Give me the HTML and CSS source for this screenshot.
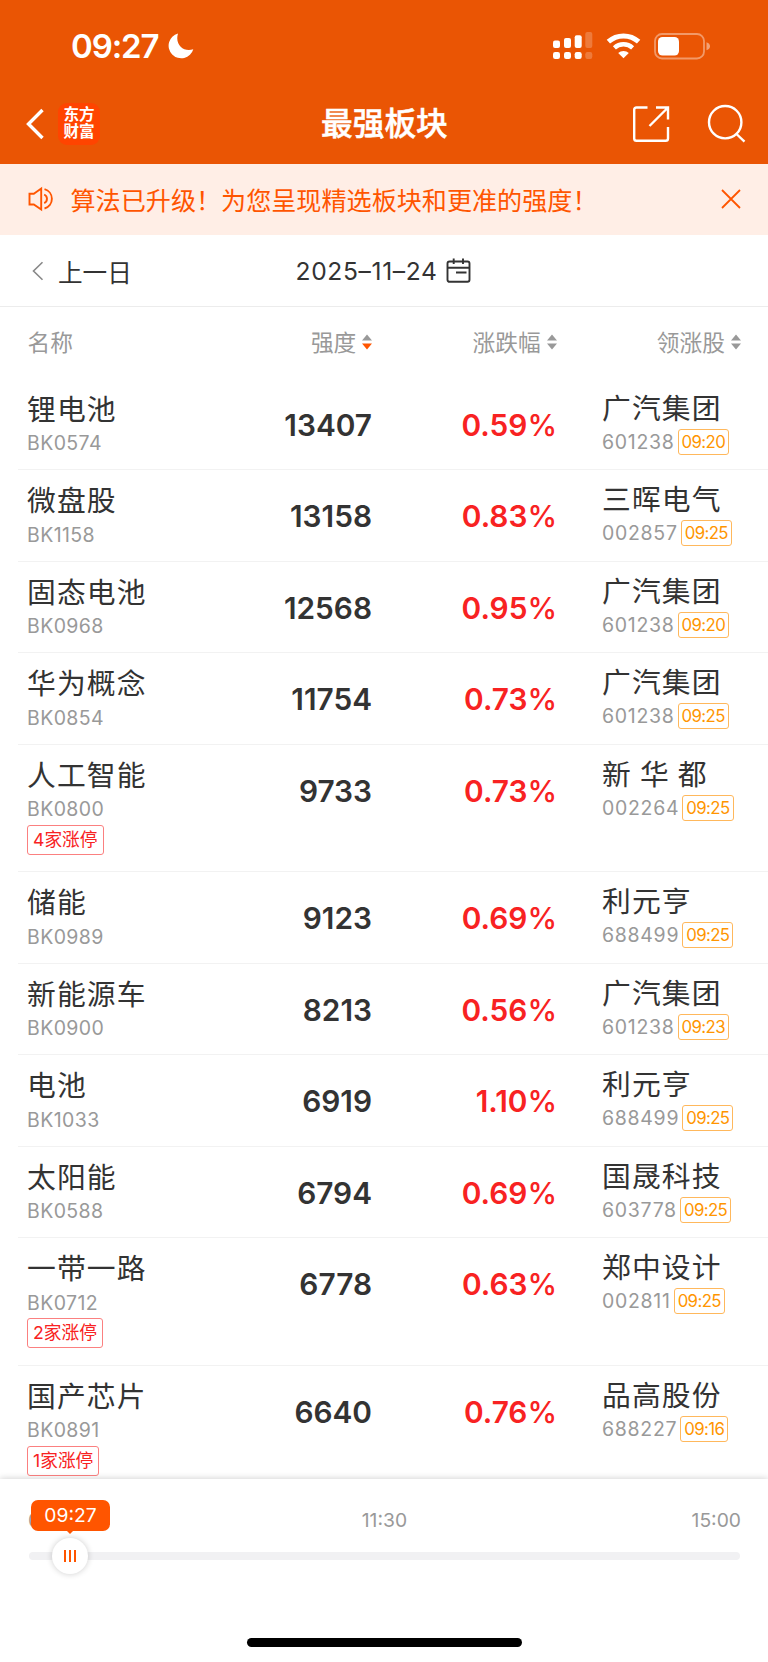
FILE: index.html
```html
<!DOCTYPE html>
<html lang="zh-CN">
<head>
    <meta charset="utf-8">
    <title>最强板块</title>
    <link rel="stylesheet" href="styles.css">
</head>

<body>
<div class="page">

  <header class="top">
    <div class="status">
      <span class="clock">09:27</span>
      <svg class="moon" width="26" height="26" viewBox="0 0 26 26"><path d="M10 0.5A12.6 12.6 0 1 0 25.3 16.2C16 19.5 6.500 12 10 0.500Z" fill="#fff"/></svg>
      <svg class="signal" width="40" height="28" viewBox="0 0 40 28" fill="#fff">
        <rect x="0" y="8.500" width="7" height="7.500" rx="2"/><rect x="0" y="20" width="7" height="7" rx="2.200"/>
        <rect x="11" y="6" width="7" height="10" rx="2"/><rect x="11" y="20" width="7" height="7" rx="2.200"/>
        <rect x="21.700" y="3.200" width="7" height="12.800" rx="2"/><rect x="21.700" y="20" width="7" height="7" rx="2.200"/>
        <g opacity=".22"><rect x="32.300" y="0" width="7" height="16" rx="2"/><rect x="32.300" y="20" width="7" height="7" rx="2.200"/></g>
      </svg>
      <svg class="wifi" width="36" height="26" viewBox="0 0 36 26" fill="none" stroke="#fff">
        <path d="M2.400 8.700A22.500 22.500 0 0 1 32.600 8.700" stroke-width="5"/>
        <path d="M8.400 14.800A13.500 13.500 0 0 1 26.600 14.800" stroke-width="4.400"/>
        <path d="M17.500 25.300L12.200 20A7.800 7.800 0 0 1 22.800 20Z" fill="#fff" stroke="none"/>
      </svg>
      <svg class="battery" width="57" height="27" viewBox="0 0 57 27">
        <rect x="1" y="1" width="49" height="24.500" rx="7" fill="none" stroke="#fff" stroke-opacity=".4" stroke-width="1.800"/>
        <rect x="4" y="4" width="21" height="18.500" rx="4.500" fill="#fff"/>
        <path d="M52.500 9.300Q56 10.500 56 13.300T52.500 17.300Z" fill="#fff" fill-opacity=".45"/>
      </svg>
    </div>
    <div class="nav">
      <svg class="back" width="20" height="32" viewBox="0 0 20 32"><path d="M17.500 2L3.500 16L17.500 30" fill="none" stroke="#fff" stroke-width="3.400"/></svg>
      <div class="logo">东方<br>财富</div>
      <h1>最强板块</h1>
      <svg class="share" width="38" height="38" viewBox="0 0 38 38" fill="none" stroke="#fff" stroke-width="2.400">
        <path d="M15.500 2.500H4.500Q2.200 2.500 2.200 4.800V33.500Q2.200 35.800 4.500 35.800H33.700Q36 35.800 36 33.500V22"/>
        <path d="M24 2.500H36V14.500M36 2.500L17.500 21"/>
      </svg>
      <svg class="search" width="40" height="40" viewBox="0 0 40 40" fill="none" stroke="#fff" stroke-width="2.400">
        <circle cx="18.200" cy="18.200" r="16.200"/><path d="M29.500 30L37.500 37.700"/>
      </svg>
    </div>
  </header>

  <div class="notice">
    <svg class="horn" width="28" height="26" viewBox="0 0 28 26" fill="none" stroke="#ff5500" stroke-width="1.900">
      <path d="M1.500 7.800H5.800L13.200 2.500V23.500L5.800 18.500H1.500Z"/>
      <path d="M16.200 8.500A4.800 4.800 0 0 1 16.200 17.200M16.500 3.200A10 10 0 0 1 16.500 22.500"/>
    </svg>
    <span>算法已升级！为您呈现精选板块和更准的强度！</span>
    <svg class="close" width="20" height="20" viewBox="0 0 20 20"><path d="M1 1L19 19M19 1L1 19" stroke="#ff5500" stroke-width="1.800"/></svg>
  </div>

  <div class="datebar">
    <svg class="prev" width="12" height="20" viewBox="0 0 12 20"><path d="M10.500 1.200L1.500 10L10.500 18.800" fill="none" stroke="#888" stroke-width="1.600"/></svg>
    <span class="prev-text">上一日</span>
    <span class="date">2025–11–24</span>
    <svg class="cal" width="25" height="25" viewBox="0 0 25 25" fill="none" stroke="#333" stroke-width="1.900">
      <rect x="1.500" y="3.500" width="22" height="20.300" rx="2"/>
      <path d="M1.500 9.800H23.500M7.700 0.500V6M17 0.500V6M10 14.500H20.500"/>
    </svg>
  </div>

  <div class="grid head">
    <div>名称</div>
    <div class="num">强度<svg class="sort" width="10" height="16" viewBox="0 0 10 16"><path d="M0 6.500L5 0.500L10 6.500Z" fill="#999"/><path d="M0 9.500L5 15.500L10 9.500Z" fill="#ff5500"/></svg></div>
    <div class="num">涨跌幅<svg class="sort" width="10" height="16" viewBox="0 0 10 16" fill="#999"><path d="M0 6.500L5 0.500L10 6.500ZM0 9.500L5 15.500L10 9.500Z"/></svg></div>
    <div class="num">领涨股<svg class="sort" width="10" height="16" viewBox="0 0 10 16" fill="#999"><path d="M0 6.500L5 0.500L10 6.500ZM0 9.500L5 15.500L10 9.500Z"/></svg></div>
  </div>

  <main class="list">
    <div class="grid row">
      <div><div class="name">锂电池</div><div class="code">BK0574</div></div>
      <div class="value">13407</div>
      <div class="value up">0.59<span>%</span></div>
      <div class="leader"><div class="name">广汽集团</div><div class="code">601238<span class="time">09:20</span></div></div>
    </div>
    <div class="grid row">
      <div><div class="name">微盘股</div><div class="code">BK1158</div></div>
      <div class="value">13158</div>
      <div class="value up">0.83<span>%</span></div>
      <div class="leader"><div class="name">三晖电气</div><div class="code">002857<span class="time">09:25</span></div></div>
    </div>
    <div class="grid row">
      <div><div class="name">固态电池</div><div class="code">BK0968</div></div>
      <div class="value">12568</div>
      <div class="value up">0.95<span>%</span></div>
      <div class="leader"><div class="name">广汽集团</div><div class="code">601238<span class="time">09:20</span></div></div>
    </div>
    <div class="grid row">
      <div><div class="name">华为概念</div><div class="code">BK0854</div></div>
      <div class="value">11754</div>
      <div class="value up">0.73<span>%</span></div>
      <div class="leader"><div class="name">广汽集团</div><div class="code">601238<span class="time">09:25</span></div></div>
    </div>
    <div class="grid row tall">
      <div><div class="name">人工智能</div><div class="code">BK0800</div><span class="tag">4家涨停</span></div>
      <div class="value">9733</div>
      <div class="value up">0.73<span>%</span></div>
      <div class="leader"><div class="name spaced">新 华 都</div><div class="code">002264<span class="time">09:25</span></div></div>
    </div>
    <div class="grid row">
      <div><div class="name">储能</div><div class="code">BK0989</div></div>
      <div class="value">9123</div>
      <div class="value up">0.69<span>%</span></div>
      <div class="leader"><div class="name">利元亨</div><div class="code">688499<span class="time">09:25</span></div></div>
    </div>
    <div class="grid row">
      <div><div class="name">新能源车</div><div class="code">BK0900</div></div>
      <div class="value">8213</div>
      <div class="value up">0.56<span>%</span></div>
      <div class="leader"><div class="name">广汽集团</div><div class="code">601238<span class="time">09:23</span></div></div>
    </div>
    <div class="grid row">
      <div><div class="name">电池</div><div class="code">BK1033</div></div>
      <div class="value">6919</div>
      <div class="value up">1.10<span>%</span></div>
      <div class="leader"><div class="name">利元亨</div><div class="code">688499<span class="time">09:25</span></div></div>
    </div>
    <div class="grid row">
      <div><div class="name">太阳能</div><div class="code">BK0588</div></div>
      <div class="value">6794</div>
      <div class="value up">0.69<span>%</span></div>
      <div class="leader"><div class="name">国晟科技</div><div class="code">603778<span class="time">09:25</span></div></div>
    </div>
    <div class="grid row tall">
      <div><div class="name">一带一路</div><div class="code">BK0712</div><span class="tag">2家涨停</span></div>
      <div class="value">6778</div>
      <div class="value up">0.63<span>%</span></div>
      <div class="leader"><div class="name">郑中设计</div><div class="code">002811<span class="time">09:25</span></div></div>
    </div>
    <div class="grid row last">
      <div><div class="name">国产芯片</div><div class="code">BK0891</div><span class="tag">1家涨停</span></div>
      <div class="value">6640</div>
      <div class="value up">0.76<span>%</span></div>
      <div class="leader"><div class="name">品高股份</div><div class="code">688227<span class="time">09:16</span></div></div>
    </div>
  </main>

  <footer class="timeline">
    <div class="labels"><span>09:15</span><span>11:30</span><span>15:00</span></div>
    <div class="track">
      <div class="bubble">09:27</div>
      <div class="knob"><i></i><i></i><i></i></div>
    </div>
    <div class="home"></div>
  </footer>

</div>
</body>
</html>
```
FILE: styles.css
```css
* {
  box-sizing: border-box;
}

body {
  margin: 0;
  background: #fff;
  color: #333;
  font-family: Inter, "Noto Sans CJK SC", sans-serif;
}

svg {
  display: block;
  flex: none;
}

.page {
  width: 768px;
  height: 1662px;
  overflow: hidden;
  display: flex;
  flex-direction: column;
}

/* header */
.top {
  height: 163.5px;
  flex: none;
  background: #ea5504;
  color: #fff;
}

.status {
  height: 92px;
  padding: 0 57px 0 71px;
  display: flex;
  align-items: center;
}

.clock {
  width: 89px;
  font-size: 33px;
  font-weight: 600;
  letter-spacing: -1.1px;
  line-height: 40px;
}

.moon {
  margin-left: 8px;
}

.signal {
  margin-left: auto;
}

.wifi {
  margin-left: 13px;
}

.battery {
  margin-left: 12px;
}

.nav {
  height: 63px;
  padding: 0 21px 0 25px;
  display: flex;
  align-items: center;
}

.logo {
  width: 42px;
  height: 42px;
  margin-left: 13px;
  padding-top: 3px;
  border-radius: 9px;
  background: #ff4400;
  font-size: 15.6px;
  font-weight: 700;
  line-height: 17.5px;
  text-align: center;
}

h1 {
  margin: 0 auto 0 221px;
  font-size: 31.7px;
  font-weight: 500;
  line-height: 40px;
  -webkit-text-stroke: .5px #fff;
}

.search {
  margin-left: 37px;
}

/* notice */
.notice {
  height: 71.5px;
  flex: none;
  padding: 0 27px 0 28px;
  display: flex;
  align-items: center;
  background: #ffeee6;
  color: #ff5500;
  font-size: 25.1px;
}

.notice span {
  margin-left: 14.5px;
}

.close {
  margin-left: auto;
}

/* date */
.datebar {
  height: 72px;
  flex: none;
  padding-left: 32px;
  display: flex;
  align-items: center;
  border-bottom: 1px solid #ececec;
  font-size: 24.6px;
}

.prev-text {
  width: 237.5px;
  margin-left: 14px;
}

.date {
  letter-spacing: .65px;
}

.cal {
  margin-left: 8.5px;
}

/* table */
.grid {
  display: grid;
  grid-template-columns: 173px 172px 184px 184px;
}

.head {
  height: 71.5px;
  flex: none;
  padding: 0 0 2px 27.5px;
  grid-template-columns: 172.5px 172px 184px 184px;
  column-gap: .3px;
  align-items: center;
  color: #999;
  font-size: 22.7px;
}

.head > :nth-child(2) {
  padding-right: 0;
}

.num {
  display: flex;
  justify-content: flex-end;
  align-items: center;
}

.sort {
  margin-left: 6px;
}

.list {
  height: 1100px;
  flex: none;
  overflow: hidden;
}

.row {
  height: 91.5px;
  margin-left: 18px;
  padding: 10px 0 0 9px;
  grid-template-columns: 173px 172px 184px 184px;
  border-bottom: 1px solid #f2f2f2;
}

.tall {
  height: 127.5px;
}

.last {
  border: 0;
}

.name {
  height: 41px;
  line-height: 41px;
  font-size: 28.8px;
  letter-spacing: 1.1px;
  white-space: nowrap;
}

.spaced {
  word-spacing: -1.2px;
}

.code {
  height: 27px;
  display: flex;
  align-items: center;
  line-height: 26px;
  font-size: 19.5px;
  letter-spacing: .4px;
  color: #999;
}

.value {
  line-height: 73px;
  text-align: right;
  font-size: 29.8px;
  font-weight: 600;
}

.up {
  padding-right: 0;
  margin-right: -1px;
  color: #f82222;
}

.up span {
  font-weight: 500;
}

.leader {
  padding-left: 46px;
}

.leader .name {
  height: 40px;
  line-height: 39px;
}

.leader .code {
  height: 26px;
  letter-spacing: .7px;
}

.time {
  height: 26px;
  margin-left: 3px;
  padding: 0 3px;
  border: 1px solid #ffb85c;
  border-radius: 3px;
  line-height: 24px;
  font-size: 16.8px;
  letter-spacing: -.6px;
  color: #ff9500;
}

.tag {
  display: inline-block;
  height: 30px;
  margin: 2px 0 0 0;
  padding: 0 5px;
  border: 1px solid #fb8080;
  border-radius: 3px;
  line-height: 28px;
  font-size: 17.7px;
  vertical-align: top;
  color: #f82222;
}

/* timeline */
.timeline {
  position: relative;
  height: 184px;
  flex: none;
  padding: 28px 28px 0;
  background: #fff;
  box-shadow: 0 -1px 6px rgba(0, 0, 0, .16);
}

.labels {
  margin-right: -1px;
  display: flex;
  justify-content: space-between;
  line-height: 26px;
  font-size: 19.3px;
  color: #999;
}

.track {
  position: relative;
  height: 8px;
  margin: 19px 0 0 1px;
  border-radius: 4px;
  background: #f1f1f3;
}

.bubble {
  position: absolute;
  left: 2px;
  top: -52px;
  width: 79px;
  height: 31px;
  border-radius: 7px;
  background: #ff5500;
  color: #fff;
  font-size: 19.3px;
  line-height: 31px;
  text-align: center;
}

.bubble::after {
  content: "";
  position: absolute;
  left: 35px;
  top: 30px;
  border: 4.5px solid transparent;
  border-top-color: #ff5500;
  border-bottom: 0;
}

.knob {
  position: absolute;
  left: 23px;
  top: -14px;
  width: 36px;
  height: 36px;
  display: flex;
  justify-content: center;
  align-items: center;
  gap: 3px;
  border-radius: 50%;
  background: #fff;
  box-shadow: 0 0 6px rgba(0, 0, 0, .2);
}

.knob i {
  width: 2px;
  height: 12px;
  background: #ff5500;
}

.home {
  width: 275px;
  height: 9px;
  margin: 78.5px auto 0;
  border-radius: 5px;
  background: #000;
}
```
